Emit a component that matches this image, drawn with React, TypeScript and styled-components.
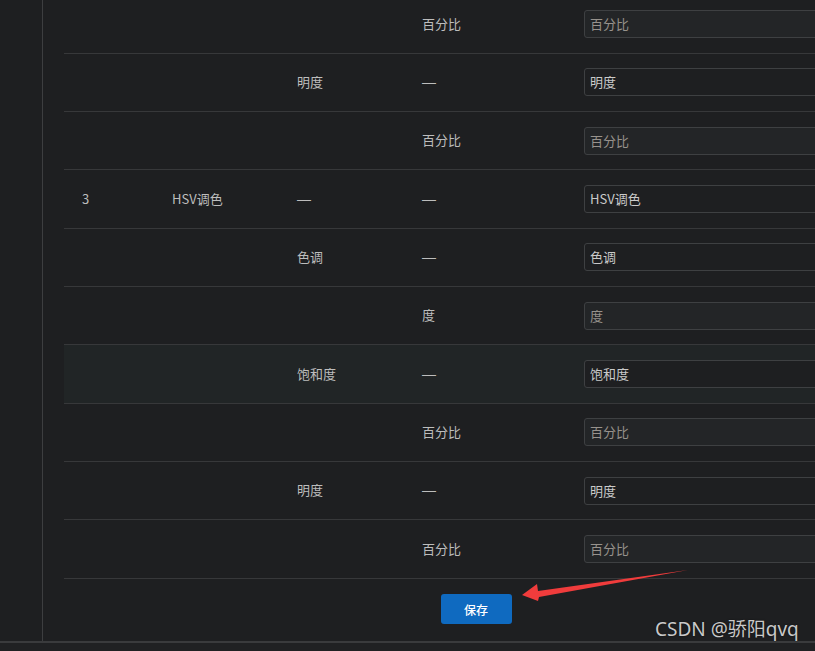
import React from 'react';
import styled, { createGlobalStyle } from 'styled-components';

const GlobalStyle = createGlobalStyle`
    html, body {
        margin: 0;
        padding: 0;
        background: #1e1f21;
        font-family: "Noto Sans CJK SC", "Noto Sans", sans-serif;
        overflow: hidden;
    }
`;

const Page = styled.div`
    position: relative;
    width: 815px;
    height: 651px;
    display: flex;
    flex-direction: column;
    overflow: hidden;
`;
const Body = styled.div`
    display: flex;
    height: 641px;
`;
const Sidebar = styled.div`
    width: 42px;
    flex-shrink: 0;
    border-right: 1px solid #3d3e40;
`;
const Main = styled.div`
    flex: 1;
    padding-left: 21px;
    margin-top: -4.5px;
    overflow: hidden;
`;
const Table = styled.div`
    width: 824px;
`;
const Row = styled.div`
    display: grid;
    grid-template-columns: 90px 125px 125px 162px 1fr;
    align-items: center;
    height: 58.33px;
    box-sizing: border-box;
    border-bottom: 1px solid #37383a;
    background: ${props => props.$active ? '#212526' : 'transparent'};
`;
const Cell = styled.div`
    padding: 0 0 2px 18px;
    font-size: 13px;
    color: #bdbdbd;
    white-space: nowrap;
`;
const Dash = styled.span`
    font-family: "Liberation Sans", sans-serif;
    font-size: 14px;
`;
const Field = styled.input`
    box-sizing: border-box;
    margin-left: 18px;
    width: 300px;
    height: 28px;
    padding: 0 5px 1px;
    border: 1px solid #3e4042;
    border-radius: 3px;
    background: ${props => props.disabled ? '#232527' : '#1e1f21'};
    color: ${props => props.disabled ? '#97928c' : '#cacaca'};
    -webkit-text-fill-color: ${props => props.disabled ? '#97928c' : '#cacaca'};
    font-family: "Noto Sans CJK SC", sans-serif;
    font-size: 13px;
    outline: none;
`;
const Footer = styled.div`
    display: flex;
    justify-content: center;
    padding-top: 15.5px;
`;
const SaveButton = styled.button`
    width: 71px;
    height: 30px;
    border: none;
    border-radius: 3px;
    background: #0f6ac0;
    color: #ffffff;
    font-family: "Noto Sans CJK SC", sans-serif;
    font-size: 12px;
    font-weight: 500;
    cursor: pointer;
`;
const BottomBar = styled.div`
    flex: 1;
    border-top: 2px solid #3a3b3d;
    background: #202123;
`;
const Arrow = styled.svg`
    position: absolute;
    left: 0;
    top: 0;
    pointer-events: none;
`;
const Watermark = styled.div`
    position: absolute;
    left: 655px;
    top: 614px;
    font-family: "Noto Sans", "Noto Sans CJK SC", sans-serif;
    font-size: 19px;
    color: #c9c9c9;
    text-shadow: 0 0 2px rgba(0, 0, 0, 0.6);
    white-space: nowrap;
`;

type RowData = {
    no?: string;
    name?: string;
    sub?: string;
    unit: string;
    value: string;
    locked?: boolean;
};

const rows: RowData[] = [
    { unit: '百分比', value: '百分比', locked: true },
    { sub: '明度', unit: '—', value: '明度' },
    { unit: '百分比', value: '百分比', locked: true },
    { no: '3', name: 'HSV调色', sub: '—', unit: '—', value: 'HSV调色' },
    { sub: '色调', unit: '—', value: '色调' },
    { unit: '度', value: '度', locked: true },
    { sub: '饱和度', unit: '—', value: '饱和度' },
    { unit: '百分比', value: '百分比', locked: true },
    { sub: '明度', unit: '—', value: '明度' },
    { unit: '百分比', value: '百分比', locked: true },
];

const show = (text?: string) => (text === '—' ? <Dash>{text}</Dash> : text);

const App = () => (
    <Page>
        <GlobalStyle />
        <Body>
            <Sidebar />
            <Main>
                <Table>
                    {rows.map((r, i) => (
                        <Row key={i} $active={i === 6}>
                            <Cell>{r.no}</Cell>
                            <Cell>{r.name}</Cell>
                            <Cell>{show(r.sub)}</Cell>
                            <Cell>{show(r.unit)}</Cell>
                            <Field readOnly value={r.value} disabled={r.locked} />
                        </Row>
                    ))}
                    <Footer>
                        <SaveButton>保存</SaveButton>
                    </Footer>
                </Table>
            </Main>
        </Body>
        <BottomBar />
        <Arrow width="815" height="651" viewBox="0 0 815 651">
            <polygon
                points="688,570 538,591 537,584 522,595 538,601 539,597"
                fill="#f03c3c"
            />
        </Arrow>
        <Watermark>CSDN @骄阳qvq</Watermark>
    </Page>
);

export default App;
